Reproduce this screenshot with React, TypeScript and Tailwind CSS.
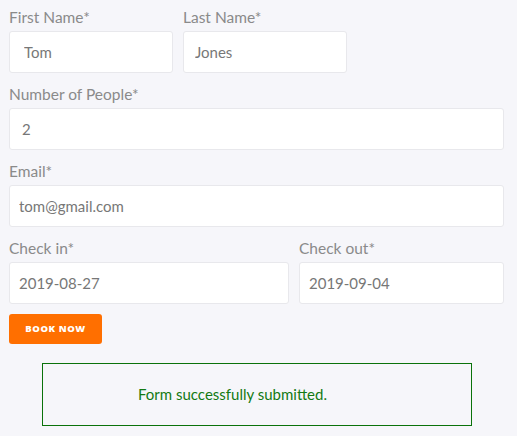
const Field = ({
  label,
  value,
  className = "",
  pad = "pl-[11px]",
}: {
  label: string;
  value: string;
  className?: string;
  pad?: string;
}) => (
  <div className={`flex flex-col ${className}`}>
    <label className="text-[15.5px] leading-[19px] text-[#8a8a8a] mb-[6px] h-[17px]">{label}</label>
    <input
      readOnly
      value={value}
      className={`h-[42px] w-full rounded-[3px] border border-[#e8e8ec] bg-white ${pad} text-[15px] text-[#777] outline-none`}
    />
  </div>
);

const App = () => {
  return (
    <div
      className="min-h-[436px] w-full bg-[#f6f6fa] pl-[9px] pr-[13px] pt-[8px]"
      style={{ fontFamily: "Lato, 'Open Sans', sans-serif" }}
    >
      <div className="flex gap-[10px]">
        <Field label="First Name*" value="Tom" className="w-[164px]" pad="pl-[14px]" />
        <Field label="Last Name*" value="Jones" className="w-[164px]" />
      </div>
      <Field label="Number of People*" value="2" className="mt-[12px]" pad="pl-[12px]" />
      <Field label="Email*" value="tom@gmail.com" className="mt-[12px]" pad="pl-[9px]" />
      <div className="mt-[12px] flex gap-[10px]">
        <Field label="Check in*" value="2019-08-27" className="w-[280px]" pad="pl-[9px]" />
        <Field label="Check out*" value="2019-09-04" className="flex-1" pad="pl-[9px]" />
      </div>
      <button
        className="mt-[10px] h-[30px] w-[93px] rounded-[3px] bg-[#ff6f00] text-[9.5px] font-extrabold tracking-[0.06em] text-white"
        style={{ fontFamily: "'Open Sans', sans-serif" }}
      >
        BOOK NOW
      </button>
      <div className="ml-[33px] mt-[19px] flex h-[63px] w-[430px] items-center border border-[#0a720a] pl-[95px]">
        <span className="text-[15px] text-[#137a13]">Form successfully submitted.</span>
      </div>
    </div>
  );
};

export default App;
